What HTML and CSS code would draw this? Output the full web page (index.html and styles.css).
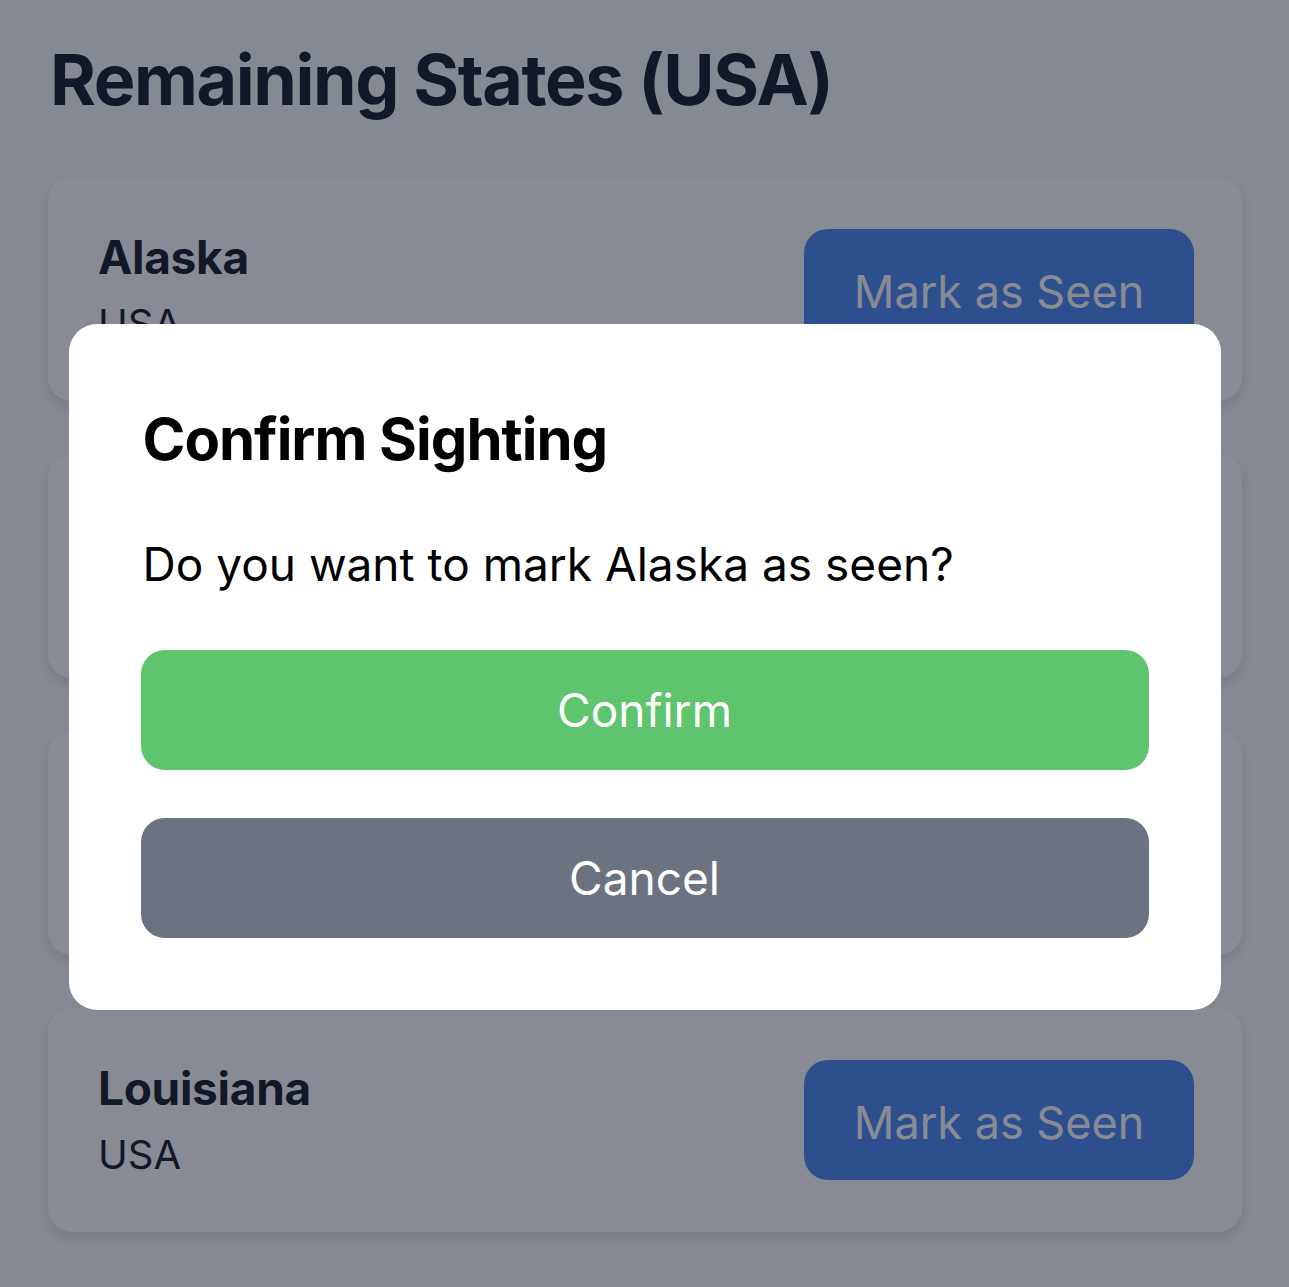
FILE: index.html
```html
<!DOCTYPE html>
<html lang="en">
<head>
    <meta charset="UTF-8">
    <meta name="viewport" content="width=device-width, initial-scale=1.0">
    <title>Remaining States</title>
    <link rel="stylesheet" href="styles.css">
</head>
<body>
    <div class="screen">
        <h1 class="page-title">Remaining States (USA)</h1>
        <div class="state-list">
            <div class="state-card">
                <div class="state-info">
                    <div class="state-name">Alaska</div>
                    <div class="state-country">USA</div>
                </div>
                <button class="mark-btn">Mark as Seen</button>
            </div>
            <div class="state-card">
                <div class="state-info">
                    <div class="state-name">Hawaii</div>
                    <div class="state-country">USA</div>
                </div>
                <button class="mark-btn">Mark as Seen</button>
            </div>
            <div class="state-card">
                <div class="state-info">
                    <div class="state-name">Kansas</div>
                    <div class="state-country">USA</div>
                </div>
                <button class="mark-btn">Mark as Seen</button>
            </div>
            <div class="state-card">
                <div class="state-info">
                    <div class="state-name">Louisiana</div>
                    <div class="state-country">USA</div>
                </div>
                <button class="mark-btn">Mark as Seen</button>
            </div>
        </div>
    </div>

    <div class="overlay">
        <div class="modal">
            <h2 class="modal-title">Confirm Sighting</h2>
            <p class="modal-text">Do you want to mark Alaska as seen?</p>
            <div class="modal-actions">
                <button class="modal-btn confirm">Confirm</button>
                <button class="modal-btn cancel">Cancel</button>
            </div>
        </div>
    </div>
</body>
</html>
```

FILE: styles.css
```css
body {
    margin: 0;
    font-family: Inter, "Noto Sans", sans-serif;
    background-color: #f9fafb;
    color: #111827;
    height: 1287px;
    overflow: hidden;
}
.screen {
    padding: 35px 47px 0 48px;
}
.page-title {
    font-size: 70px;
    font-weight: 700;
    letter-spacing: -1.4px;
    margin: 0 0 52px 2px;
    line-height: 90px;
}
.state-list {
    display: flex;
    flex-direction: column;
    gap: 53px;
}
.state-card {
    background-color: #fff;
    border-radius: 24px;
    height: 224px;
    box-sizing: border-box;
    padding: 0 48px 0 50px;
    display: flex;
    align-items: center;
    justify-content: space-between;
    box-shadow: 0 6px 14px rgba(0, 0, 0, 0.12);
}
.state-name {
    font-size: 46px;
    font-weight: 700;
    letter-spacing: -0.3px;
    line-height: 56px;
}
.state-country {
    font-size: 40px;
    line-height: 50px;
    margin-top: 14px;
}
.mark-btn {
    font-family: inherit;
    font-size: 45px;
    background-color: #4a87f5;
    color: #fff;
    border: none;
    border-radius: 24px;
    width: 390px;
    height: 120px;
    padding: 4px 0 0;
}
.overlay {
    position: fixed;
    inset: 0;
    background-color: rgba(17, 24, 39, 0.5);
    display: flex;
    align-items: center;
    justify-content: center;
    padding-top: 46px;
}
.modal {
    background-color: #fff;
    border-radius: 28px;
    width: 1152px;
    box-sizing: border-box;
    padding: 70px 72px 72px 72px;
}
.modal-title {
    font-size: 58px;
    font-weight: 700;
    letter-spacing: -1px;
    margin: 0 0 0 2px;
    line-height: 90px;
    color: #000;
}
.modal-text {
    font-size: 46px;
    margin: 50px 0 0 2px;
    line-height: 60px;
    color: #000;
}
.modal-actions {
    display: flex;
    flex-direction: column;
    gap: 48px;
    margin-top: 56px;
}
.modal-btn {
    font-family: inherit;
    font-size: 46px;
    color: #fff;
    border: none;
    border-radius: 24px;
    height: 120px;
    width: 100%;
}
.confirm {
    background-color: #5ec46d;
}
.cancel {
    background-color: #6b7280;
}
```
